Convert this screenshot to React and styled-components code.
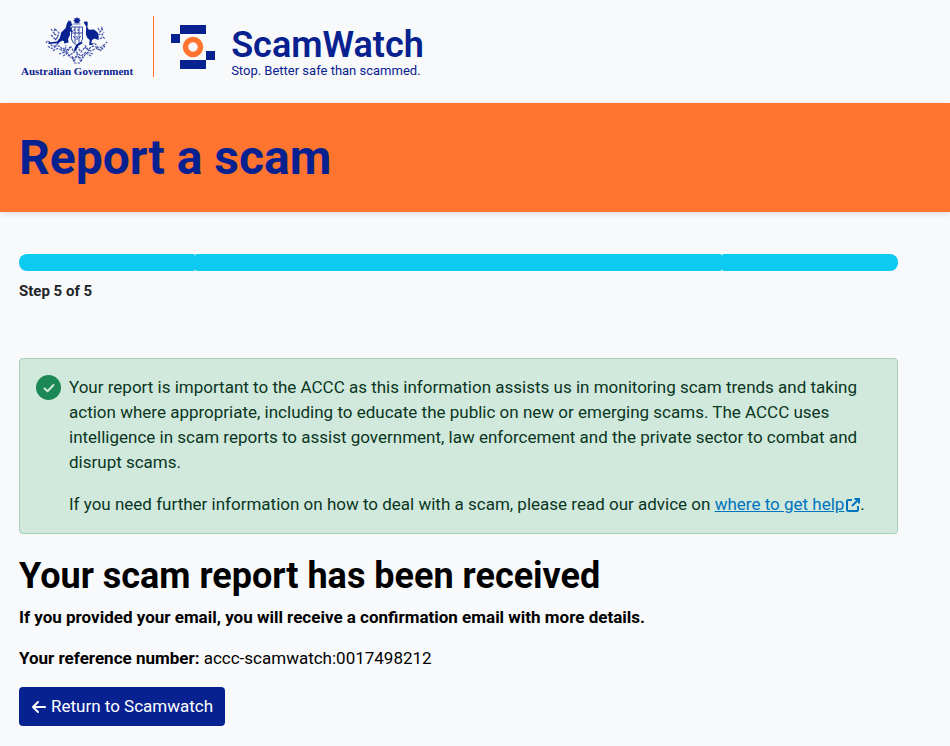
import React from "react";

import styled, { createGlobalStyle } from "styled-components";

import { FaArrowLeft } from "react-icons/fa6";

const steps = [
	{ id: 1, share: 1 },
	{ id: 2, share: 3 },
	{ id: 3, share: 1 },
];

function App() {
	return (
		<>
			<GlobalStyle />
			<Header>
				<Government />
				<ScamWatchLogo />
			</Header>
			<Banner>
				<BannerTitle>Report a scam</BannerTitle>
			</Banner>
			<Main>
				<Progress />
				<Notice />
				<Title>Your scam report has been received</Title>
				<Paragraph>
					<strong>
						If you provided your email, you will receive a confirmation email
						with more details.
					</strong>
				</Paragraph>
				<Paragraph>
					<strong>Your reference number:</strong> accc-scamwatch:0017498212
				</Paragraph>
				<Button type="button">
					<FaArrowLeft size={16} aria-hidden="true" />
					Return to Scamwatch
				</Button>
			</Main>
		</>
	);
}

function Government() {
	return (
		<GovernmentBrand>
			<Crest />
			<GovernmentName>Australian Government</GovernmentName>
		</GovernmentBrand>
	);
}

function Crest() {
	return (
		<svg width="64" height="50" viewBox="0 0 64 50" aria-hidden="true">
			<g fill="#082190">
				{/* star */}
				<path d="M32 1l1 1.500 1.800-.4-.4 1.700 1.400 1-1.500.8.100 1.700-1.600-.6-.8 1.400-.8-1.400-1.600.6.100-1.700-1.500-.8 1.400-1-.4-1.700 1.800.4z" />
				<path d="M28.500 7.500h7v1h-7z" opacity=".6" />
				{/* kangaroo */}
				<path d="M24 4l1 1.800 1-1.300.4 2.800 1.300 1.700-2.200 1.200.5 3.600 2 1.200-.5 1-2.700-.6.2 3.600-2 4 .6 3.500-4.600.9.200-2-1.800-.9-4.400 2.800-9.500.6-.2-1.300 8.700-1 2.800-3.500 1.400-5.600 4.500-4.600 1.100-4.500z" />
				{/* emu */}
				<path d="M38.500 6l3-.8 1.300 1.300-.4 5 1.600 2.300 5-.3 3.500 2.800 1.300 4.500-.3 3.200-4-1.500-2.500 1.500-.8 3.500 2.300 1.500h-4.300l.5-5-2.300-2-1.500-3.500.3-8-1.600-2.500z" />
			</g>
			<g fill="none" stroke="#082190" strokeWidth=".8">
				<path d="M26.500 11h11v12q-1 5-5.500 6-4.500-1-5.500-6zM30 11v16M34 11v16M27 17h10" />
				<path d="M28 14h2M32 14h2M28 20l2 2M32 20v4M34 22l2-2" />
			</g>
			<g
				fill="none"
				stroke="#082190"
				strokeWidth="1.200"
				strokeDasharray="2.500 1"
				opacity=".75"
			>
				<path d="M6 13l3 4 1-5M9 18l4 2 1-4M6 19l4 4 3-2M10 13l3 3M10 24l3-3" />
				<path d="M53 12l2 4 3-3M53 18l4 1 2-3M55 23l3-2 2 2M57 11l-1 4" />
				<path d="M1 27q2-4 4 0t4 3 5-3M3 30q3 4 7 1t7 2 4-4M46 28q4-2 6 2t7-1 4-3M44 33q5-5 8-1t8-2M8 35q4-4 8-1t10-4M56 35q-4-4-8-1t-8-5" />
				<path d="M18 32l4 4 4-5 3 5 3-6 4 6 4-5 4 4M14 38l6-2 4 4 6-5 6 5 5-4 7 2M18 40l5-3 3 5M46 40l-5-3-3 5M27 40l2 6 3-8 4 8 2-6M27 43q5-4 10 0M29 47h6" />
			</g>
			<path d="M29 34q1-6 7-8l2 1-5 3-2 5z" fill="#082190" />
		</svg>
	);
}

function ScamWatchLogo() {
	return (
		<Brand href="#">
			<svg width="44" height="44" viewBox="0 0 44 44" aria-hidden="true">
				<path
					d="M9 0h26v9H9zM0 9h9v9H0zM35 26h9v9h-9zM9 35h26v9H9z"
					fill="#082190"
				/>
				<circle
					cx="22"
					cy="22"
					r="7.500"
					fill="none"
					stroke="#ff7530"
					strokeWidth="5.500"
				/>
			</svg>
			<BrandText>
				<BrandName>ScamWatch</BrandName>
				<Tagline>Stop. Better safe than scammed.</Tagline>
			</BrandText>
		</Brand>
	);
}

function Progress() {
	return (
		<ProgressContainer>
			<Track>
				{steps.map((step) => (
					<Segment key={step.id} $share={step.share} />
				))}
			</Track>
			<StepText>Step 5 of 5</StepText>
		</ProgressContainer>
	);
}

function Notice() {
	return (
		<NoticeBox>
			<Badge>
				<CheckIcon viewBox="0 0 12 12" aria-hidden="true">
					<path d="M1.500 6.500L4.500 9.200L10.500 3" />
				</CheckIcon>
			</Badge>
			<NoticeText>
				<p>
					Your report is important to the ACCC as this information assists us in
					monitoring scam trends and taking action where appropriate, including
					to educate the public on new or emerging scams. The ACCC uses
					intelligence in scam reports to assist government, law enforcement and
					the private sector to combat and disrupt scams.
				</p>
				<p>
					If you need further information on how to deal with a scam, please
					read our advice on{" "}
					<HelpLink href="#">
						where to get help
						<ExternalIcon />
					</HelpLink>
					.
				</p>
			</NoticeText>
		</NoticeBox>
	);
}

function ExternalIcon() {
	return (
		<LinkIcon viewBox="0 0 14 14" aria-hidden="true">
			<path d="M6 2H2.500Q1 2 1 3.500v8Q1 13 2.500 13h8q1.500 0 1.500-1.500V8M8.500 1H13v4.500M13 1L6 8" />
		</LinkIcon>
	);
}

export default App;

const GlobalStyle = createGlobalStyle`
	* {
		box-sizing: border-box;
	}

	body {
		margin: 0;
		background: #f8f9fb;
		color: #000;
		font-family: Roboto, "Liberation Sans", sans-serif;
		font-size: 17px;
		line-height: 25px;
	}

	h1, h2, p {
		margin: 0;
	}
`;

const Header = styled.header`
	display: flex;
	padding: 16px 19px 26px;
`;

const GovernmentBrand = styled.div`
	display: flex;
	flex-direction: column;
	align-items: center;
	padding: 0 20px 0 2px;
	border-right: 1px solid #ff7530;
`;

const GovernmentName = styled.span`
	color: #082190;
	font-family: "Liberation Serif", serif;
	font-size: 11px;
	font-weight: 700;
	line-height: 11px;
`;

const Brand = styled.a`
	display: flex;
	gap: 16px;
	padding: 9px 0 0 17px;
	color: #082190;
	text-decoration: none;
`;

const BrandText = styled.span`
	display: flex;
	flex-direction: column;
`;

const BrandName = styled.span`
	font-size: 36px;
	font-weight: 600;
	line-height: 40px;
`;

const Tagline = styled.span`
	font-size: 13px;
	line-height: 12px;
`;

const Banner = styled.section`
	padding: 29px 19px 28px;
	background: #ff7530;
	box-shadow: 0 2px 6px rgba(0, 0, 0, 0.1);
`;

const BannerTitle = styled.h1`
	color: #082190;
	font-size: 48px;
	font-weight: 700;
	line-height: 52px;
`;

const Main = styled.main`
	padding: 42px 52px 19px 19px;
`;

const ProgressContainer = styled.div`
	margin-bottom: 54px;
`;

const Track = styled.div`
	display: flex;
	height: 17px;
	overflow: hidden;
	border-radius: 8px;
`;

const Segment = styled.div`
	flex: ${(props) => props.$share};
	background: #0dcaf0;
	border-radius: 2px;
`;

const StepText = styled.p`
	margin-top: 8px;
	color: #212529;
	font-size: 15px;
	font-weight: 700;
`;

const NoticeBox = styled.section`
	display: flex;
	gap: 8px;
	padding: 16px;
	background: #d1e9dd;
	border: 1px solid #a3cfbb;
	border-radius: 4px;
`;

const Badge = styled.span`
	display: flex;
	flex-shrink: 0;
	align-items: center;
	justify-content: center;
	width: 25px;
	height: 25px;
	background: #1c8855;
	border-radius: 50%;
`;

const CheckIcon = styled.svg`
	width: 12px;
	height: 12px;
	fill: none;
	stroke: #d1e9dd;
	stroke-width: 2;
	stroke-linecap: round;
	stroke-linejoin: round;
`;

const NoticeText = styled.div`
	display: flex;
	flex-direction: column;
	gap: 17px;
	color: #0a3622;
`;

const HelpLink = styled.a`
	color: #0073bd;
`;

const LinkIcon = styled.svg`
	width: 14px;
	height: 14px;
	margin-left: 2px;
	vertical-align: -2px;
	fill: none;
	stroke: currentColor;
	stroke-width: 2;
`;

const Title = styled.h2`
	margin: 21px 0 8px;
	font-size: 36px;
	font-weight: 700;
	line-height: 42px;
`;

const Paragraph = styled.p`
	margin-bottom: 16px;
`;

const Button = styled.button`
	display: flex;
	align-items: center;
	gap: 4px;
	padding: 7px 12px;
	background: #082190;
	border: 0;
	border-radius: 4px;
	color: #fff;
	font: inherit;
	cursor: pointer;
`;
